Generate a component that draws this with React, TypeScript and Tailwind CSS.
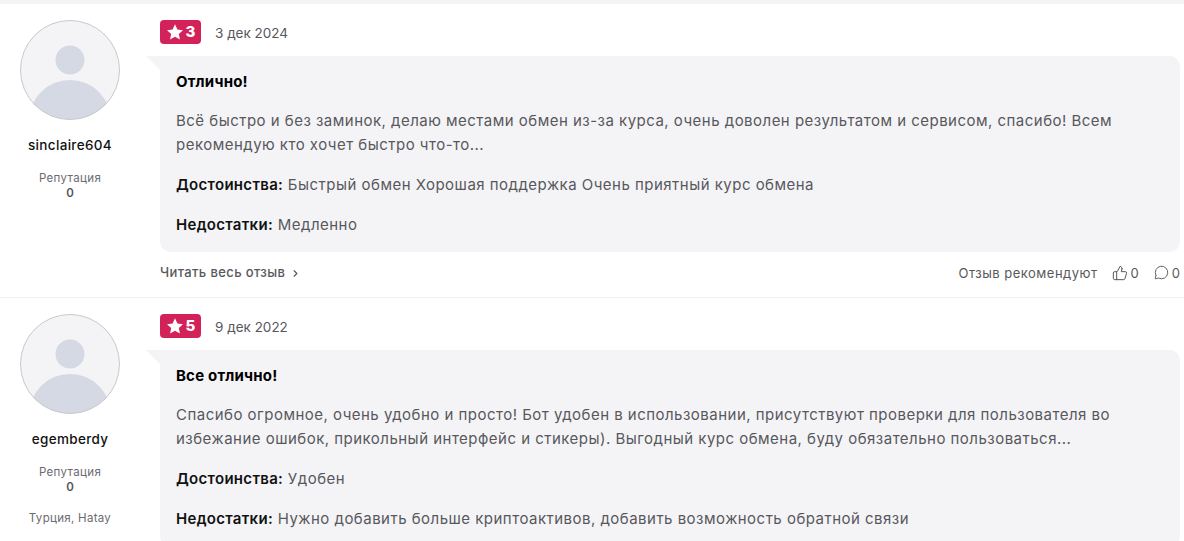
import { ThumbsUp, MessageCircle, ChevronRight } from "lucide-react";

type Review = {
  user: string;
  location?: string;
  rating: number;
  date: string;
  title: string;
  lines: string[];
  pros: string;
  cons: string;
};

const reviews: Review[] = [
  {
    user: "sinclaire604",
    rating: 3,
    date: "3 дек 2024",
    title: "Отлично!",
    lines: [
      "Всё быстро и без заминок, делаю местами обмен из-за курса, очень доволен результатом и сервисом, спасибо! Всем",
      "рекомендую кто хочет быстро что-то...",
    ],
    pros: "Быстрый обмен Хорошая поддержка Очень приятный курс обмена",
    cons: "Медленно",
  },
  {
    user: "egemberdy",
    location: "Турция, Hatay",
    rating: 5,
    date: "9 дек 2022",
    title: "Все отлично!",
    lines: [
      "Спасибо огромное, очень удобно и просто! Бот удобен в использовании, присутствуют проверки для пользователя во",
      "избежание ошибок, прикольный интерфейс и стикеры). Выгодный курс обмена, буду обязательно пользоваться...",
    ],
    pros: "Удобен",
    cons: "Нужно добавить больше криптоактивов, добавить возможность обратной связи",
  },
];

function Avatar() {
  return (
    <svg width="100" height="100" viewBox="0 0 100 100" className="block">
      <defs>
        <clipPath id="avatar-clip">
          <circle cx="50" cy="50" r="49.5" />
        </clipPath>
      </defs>
      <circle cx="50" cy="50" r="49.5" fill="#f4f4f7" />
      <g clipPath="url(#avatar-clip)" fill="#d5d9e3">
        <circle cx="50" cy="40" r="14.5" />
        <circle cx="50" cy="101" r="41" />
      </g>
      <circle cx="50" cy="50" r="49.5" fill="none" stroke="#c9c9cc" strokeWidth="1" />
    </svg>
  );
}

function ReviewCard({ review }: { review: Review }) {
  return (
    <article className="flex h-[294px] shrink-0 border-b border-[#f1f1f4] bg-white pr-[4px]">
      <div className="flex w-[160px] shrink-0 flex-col items-center pt-4 pr-5">
        <Avatar />
        <div className="mt-[15px] text-[13.5px] leading-5 font-medium tracking-[0.33px] text-[#111]">{review.user}</div>
        <div className="mt-[16px] text-[11.5px] leading-[15px] tracking-[0.35px] text-[#6b6b70]">Репутация</div>
        <div className="text-[11.5px] leading-[15px] font-semibold text-[#55555a]">0</div>
        {review.location && (
          <div className="mt-[16px] text-[11.5px] leading-[15px] tracking-[0.3px] text-[#6b6b70]">{review.location}</div>
        )}
      </div>

      <div className="flex min-w-0 flex-1 flex-col pt-4">
        <div className="flex h-6 items-center gap-[14px]">
          <span className="flex h-6 w-[41px] items-center justify-center gap-[2px] rounded-[4px] bg-[#d3225a] text-[15px] font-extrabold text-white">
            <svg width="18" height="18" viewBox="0 0 24 24" fill="#fff">
              <path d="M12 1.800l3.200 6.900 7.400.9-5.500 5.100 1.500 7.400L12 18.400l-6.600 3.700 1.500-7.400L1.400 9.600l7.400-.9z" />
            </svg>
            {review.rating}
          </span>
          <span className="pt-[2px] text-[13.5px] text-[#58585c]">{review.date}</span>
        </div>

        <div className="relative mt-[12px] h-[196px] rounded-b-[10px] rounded-tr-[10px] bg-[#f4f4f7] px-4 pt-[14px] text-[15px] tracking-[0.48px] text-[#58585c]">
          <span className="absolute top-0 -left-[14px] h-0 w-0 border-t-[14px] border-l-[14px] border-t-[#f4f4f7] border-l-transparent" />
          <h3 className="text-[15px] leading-6 font-bold tracking-[0.2px] text-black">{review.title}</h3>
          <p className="mt-[15px] leading-6">
            {review.lines.map((line) => (
              <span key={line} className="block whitespace-nowrap">
                {line}
              </span>
            ))}
          </p>
          <p className="mt-4 leading-6">
            <span className="font-semibold tracking-[0.3px] text-[#111]">Достоинства:</span> {review.pros}
          </p>
          <p className="mt-4 leading-6">
            <span className="font-semibold tracking-[0.3px] text-[#111]">Недостатки:</span> {review.cons}
          </p>
        </div>

        <div className="mt-[11px] flex h-5 items-center justify-between text-[#58585c]">
          <span className="flex items-center gap-[5px] text-[13px] font-medium tracking-[0.38px]">
            Читать весь отзыв
            <ChevronRight size={11} strokeWidth={2.5} />
          </span>
          <span className="flex items-center pt-[1px] text-[13px]">
            <span className="tracking-[0.5px]">Отзыв рекомендуют</span>
            <ThumbsUp size={16} strokeWidth={1.5} className="ml-[14px] -translate-y-px" />
            <span className="ml-[3px]">0</span>
            <MessageCircle size={15} strokeWidth={1.5} className="ml-[15px] -translate-y-px" />
            <span className="ml-[3px]">0</span>
          </span>
        </div>
      </div>
    </article>
  );
}

export default function App() {
  return (
    <div className="h-[541px] w-[1184px] overflow-hidden bg-white font-['Inter',sans-serif]">
      <div className="h-[4px] bg-[#f4f4f7]" />
      {reviews.map((review) => (
        <ReviewCard key={review.user} review={review} />
      ))}
    </div>
  );
}
